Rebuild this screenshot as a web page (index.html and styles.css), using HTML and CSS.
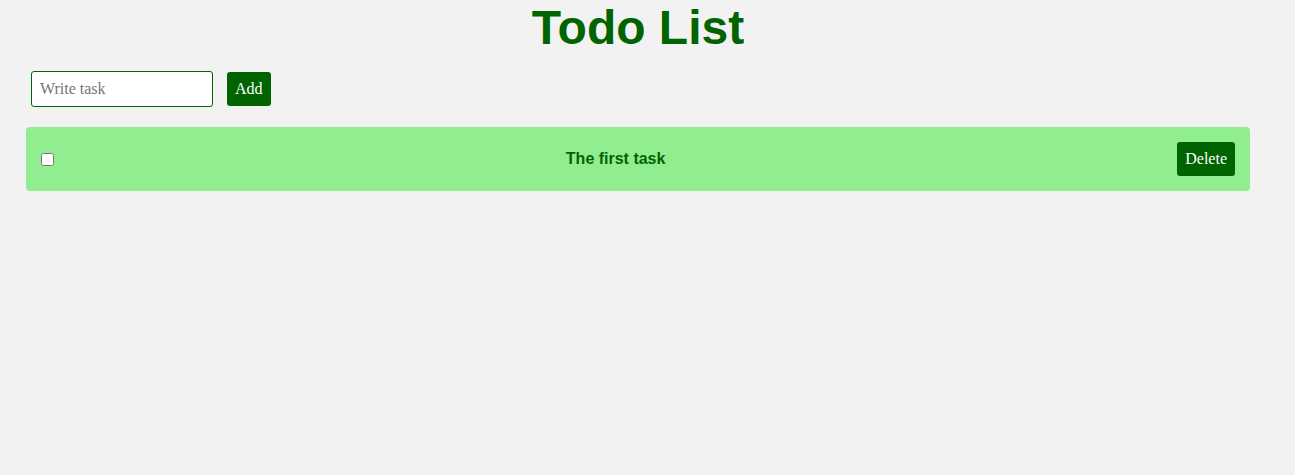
FILE: index.html
```html
<!DOCTYPE html>
<html lang="en">
<head>
<meta charset="utf-8">
<title>Todo List</title>
<link rel="stylesheet" href="styles.css">
</head>
<body>
<div class="app">
  <h1 class="title">Todo List</h1>
  <form class="add-form">
    <input class="task-input" type="text" placeholder="Write task">
    <button class="btn" type="button">Add</button>
  </form>
  <ul class="task-list">
    <li class="task">
      <input class="task-check" type="checkbox">
      <span class="task-text">The first task</span>
      <button class="btn" type="button">Delete</button>
    </li>
  </ul>
</div>
</body>
</html>
```

FILE: styles.css
```css
html, body {
  margin: 0;
  background: #f2f2f2;
}
body {
  padding: 0 45px 0 26px;
  font-family: "Liberation Serif", "Times New Roman", serif;
}
.app {
  display: flex;
  flex-direction: column;
}
.title {
  margin: 0;
  text-align: center;
  font-family: "Liberation Sans", Arial, sans-serif;
  font-weight: bold;
  font-size: 48px;
  color: #006400;
}
.add-form {
  display: flex;
  align-items: center;
  gap: 14px;
  margin: 16px 0 0 5px;
}
.task-input {
  box-sizing: border-box;
  width: 182px;
  height: 36px;
  padding: 8px;
  border: 1px solid #006400;
  border-radius: 3px;
  background: #fff;
  font-family: "Liberation Serif", "Times New Roman", serif;
  font-size: 16px;
  outline: none;
}
.task-input::placeholder {
  color: #757575;
}
.btn {
  height: 34px;
  padding: 0 8px;
  border: none;
  border-radius: 3px;
  background: #006400;
  color: #fff;
  font-family: "Liberation Serif", "Times New Roman", serif;
  font-size: 16px;
}
.task-list {
  list-style: none;
  margin: 20px 0 0;
  padding: 0;
}
.task {
  display: flex;
  align-items: center;
  justify-content: space-between;
  height: 64px;
  box-sizing: border-box;
  padding: 0 15px;
  background: #90ee90;
  border-radius: 4px;
}
.task-check {
  margin: 0;
  width: 13px;
  height: 13px;
}
.task-text {
  font-family: "Liberation Sans", Arial, sans-serif;
  font-weight: bold;
  font-size: 16px;
  color: #006400;
}
```
